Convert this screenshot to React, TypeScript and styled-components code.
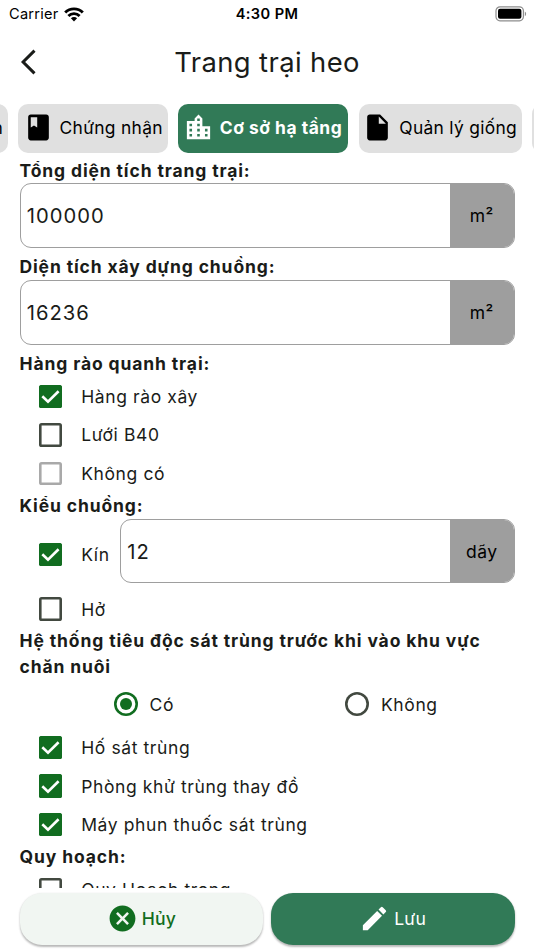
import React from "react";
import styled, { createGlobalStyle, css } from "styled-components";
import { MdBook, MdCancel, MdEdit, MdInsertDriveFile, MdLocationCity } from "react-icons/md";

const GlobalStyle = createGlobalStyle`
  * { box-sizing: border-box; }
  html, body { margin: 0; padding: 0; background: #fff; overflow: hidden; }
  body { font-family: Inter, "Liberation Sans", sans-serif; color: #1a1c19; }
`;

const Screen = styled.div`
  width: 534px;
  height: 950px;
  display: flex;
  flex-direction: column;
  overflow: hidden;
  background: #fff;
`;

const StatusBar = styled.div`
  height: 26px;
  flex: none;
  display: grid;
  grid-template-columns: 1fr auto 1fr;
  align-items: center;
  padding: 1px 7px 0 9px;
  font-size: 14.6px;
  line-height: 26px;
  color: #000;
`;

const Carrier = styled.div`
  display: flex;
  align-items: center;
  gap: 5.5px;
  letter-spacing: 0.22px;
`;

const Clock = styled.div`
  margin-left: -2px;
  font-weight: 600;
  letter-spacing: 0.4px;
`;

const BatterySlot = styled.div`
  display: flex;
  justify-content: flex-end;
`;

const Header = styled.header`
  height: 74px;
  flex: none;
  display: grid;
  grid-template-columns: 60px 1fr 60px;
  align-items: center;
`;

const BackButton = styled.button`
  border: 0;
  background: none;
  padding: 0 0 2px 20px;
  display: flex;
  color: inherit;
`;

const Title = styled.h1`
  margin: 0;
  padding-bottom: 2px;
  text-align: center;
  font-size: 27.4px;
  font-weight: 400;
  line-height: 36px;
  letter-spacing: 0.4px;
  white-space: nowrap;
`;

const Tabs = styled.nav`
  height: 57.5px;
  padding-top: 3.5px;
  flex: none;
  display: flex;
  gap: 10.4px;
  overflow: hidden;
`;

const Tab = styled.button<{ $width: number; $active?: boolean; $shift?: number }>`
  flex: none;
  width: ${(p) => p.$width}px;
  margin-left: ${(p) => p.$shift ?? 0}px;
  height: 49px;
  border: 0;
  border-radius: 10px;
  padding: 0 5px 1px 5px;
  display: flex;
  align-items: center;
  justify-content: flex-end;
  gap: 6px;
  white-space: nowrap;
  font-family: inherit;
  font-size: 17.4px;
  letter-spacing: 0.3px;
  background: #e0e0e0;
  color: #000;
  svg { flex: none; }
  ${(p) =>
    p.$active &&
    css`
      padding-right: 6px;
      background: #317a57;
      color: #fff;
      font-weight: 700;
      letter-spacing: 0.53px;
    `}
`;

const Form = styled.main`
  flex: none;
  height: 730px;
  overflow: hidden;
  padding: 0 19.5px;
`;

const Label = styled.div`
  font-size: 17.5px;
  font-weight: 700;
  line-height: 25.8px;
  letter-spacing: 0.87px;
`;

const Field = styled.div`
  flex: 1;
  height: 64.5px;
  margin-bottom: 6.5px;
  display: flex;
  border: 1.3px solid #9e9e9e;
  border-radius: 11px;
  overflow: hidden;
`;

const Value = styled.div`
  flex: 1;
  padding-left: 6.3px;
  line-height: 64px;
  font-size: 20.2px;
  letter-spacing: 1px;
`;

const Unit = styled.div`
  width: 63.5px;
  background: #9e9e9e;
  color: #000;
  text-align: center;
  font-size: 17.5px;
  line-height: 64px;
  letter-spacing: 0.4px;
`;

const Option = styled.div`
  height: 38.7px;
  padding-left: 19.3px;
  display: flex;
  align-items: center;
`;

const FieldRow = styled.div`
  display: flex;
`;

const FieldOption = styled(Option)`
  width: 100.5px;
  height: 71px;
`;

const OptionText = styled.span`
  margin-left: 19px;
  font-size: 17.5px;
  letter-spacing: 0.6px;
  white-space: nowrap;
`;

const Box = styled.span<{ $state: "on" | "off" | "disabled" }>`
  flex: none;
  width: 23.4px;
  height: 23.4px;
  border-radius: 2.6px;
  display: flex;
  align-items: center;
  justify-content: center;
  box-shadow: inset 0 0 0 2.6px ${(p) => ({ on: "#116d20", off: "#424940", disabled: "#a9a9a9" })[p.$state]};
  background: ${(p) => (p.$state === "on" ? "#116d20" : "transparent")};
  svg { flex: none; }
`;

const RadioRow = styled.div`
  height: 48px;
  display: flex;
  padding-left: 94px;
`;

const RadioOption = styled.div`
  flex: none;
  width: 231.5px;
  display: flex;
  align-items: center;
`;

const Radio = styled.span<{ $on?: boolean }>`
  width: 24px;
  height: 24px;
  border-radius: 50%;
  box-shadow: inset 0 0 0 2.6px ${(p) => (p.$on ? "#116d20" : "#424940")};
  display: flex;
  align-items: center;
  justify-content: center;
  &::after {
    content: "";
    width: 12px;
    height: 12px;
    border-radius: 50%;
    background: ${(p) => (p.$on ? "#116d20" : "transparent")};
  }
`;

const RadioText = styled.span`
  margin-left: 12px;
  font-size: 17.5px;
  letter-spacing: 0.6px;
`;

const Actions = styled.footer`
  flex: none;
  display: flex;
  gap: 7.5px;
  padding: 5.5px 19.5px 0;
`;

const Action = styled.button<{ $primary?: boolean }>`
  flex: 1;
  height: 51.5px;
  border: 0;
  border-radius: 22px;
  display: flex;
  align-items: center;
  justify-content: center;
  gap: 4px;
  font-family: inherit;
  font-size: 17.6px;
  font-weight: ${(p) => (p.$primary ? 400 : 500)};
  letter-spacing: 0.15px;
  color: ${(p) => (p.$primary ? "#fff" : "#116d20")};
  background: ${(p) => (p.$primary ? "#317a57" : "#f1f6f2")};
  box-shadow: 0 1.3px 2px rgba(0, 0, 0, 0.24), 0 1px 3px rgba(0, 0, 0, 0.08);
`;

const WifiIcon = () => (
  <svg width="20" height="15" viewBox="0 0 20 15" fill="none" stroke="#000" strokeWidth="2.9">
    <path d="M1.2 5.5a12.4 12.4 0 0 1 17.6 0" />
    <path d="M4.4 9a7.9 7.9 0 0 1 11.2 0" />
    <path d="M10 14.4 6.9 11.3a4.4 4.4 0 0 1 6.2 0z" fill="#000" stroke="none" />
  </svg>
);

const BatteryIcon = () => (
  <svg width="32" height="16" viewBox="0 0 32 16">
    <rect x="1" y="0.8" width="27.4" height="14" rx="4" fill="none" stroke="#8d8d8d" strokeWidth="1.2" />
    <rect x="3" y="2.8" width="23.4" height="10" rx="2" fill="#000" />
    <path d="M29.8 5.6v4.6c1.8-.8 1.8-3.8 0-4.6z" fill="#8d8d8d" />
  </svg>
);

const BackIcon = () => (
  <svg width="18" height="26" viewBox="0 0 18 26" fill="none" stroke="#1a1c19" strokeWidth="3">
    <path d="M14.5 1.6 3.1 13 14.5 24.4" />
  </svg>
);

const CheckIcon = () => (
  <svg width="19" height="15" viewBox="0 0 19 15" fill="none" stroke="#fff" strokeWidth="2.6">
    <path d="M1.3 7.2 7 12.6 17.6 2.2" />
  </svg>
);

type CheckState = "on" | "off" | "disabled";

const Checkbox = ({ state }: { state: CheckState }) => (
  <Box $state={state}>{state === "on" && <CheckIcon />}</Box>
);

const CheckOption = ({ state, text }: { state: CheckState; text: string }) => (
  <Option>
    <Checkbox state={state} />
    <OptionText>{text}</OptionText>
  </Option>
);

const UnitField = ({ value, unit }: { value: string; unit: string }) => (
  <Field>
    <Value>{value}</Value>
    <Unit>{unit}</Unit>
  </Field>
);

export default function App() {
  return (
    <>
      <GlobalStyle />
      <Screen>
        <StatusBar>
          <Carrier>
            Carrier
            <WifiIcon />
          </Carrier>
          <Clock>4:30 PM</Clock>
          <BatterySlot>
            <BatteryIcon />
          </BatterySlot>
        </StatusBar>
        <Header>
          <BackButton aria-label="Quay lại">
            <BackIcon />
          </BackButton>
          <Title>Trang trại heo</Title>
        </Header>
        <Tabs>
          <Tab $width={148} $shift={-140}>Thông tin</Tab>
          <Tab $width={149.4}>
            <MdBook size={31} />
            Chứng nhận
          </Tab>
          <Tab $width={170} $active>
            <MdLocationCity size={31} />
            Cơ sở hạ tầng
          </Tab>
          <Tab $width={163.4}>
            <MdInsertDriveFile size={31} />
            Quản lý giống
          </Tab>
          <Tab $width={150} />
        </Tabs>
        <Form>
          <Label>Tổng diện tích trang trại:</Label>
          <UnitField value="100000" unit="m²" />
          <Label>Diện tích xây dựng chuồng:</Label>
          <UnitField value="16236" unit="m²" />
          <Label>Hàng rào quanh trại:</Label>
          <CheckOption state="on" text="Hàng rào xây" />
          <CheckOption state="off" text="Lưới B40" />
          <CheckOption state="disabled" text="Không có" />
          <Label>Kiểu chuồng:</Label>
          <FieldRow>
            <FieldOption>
              <Checkbox state="on" />
              <OptionText>Kín</OptionText>
            </FieldOption>
            <UnitField value="12" unit="dãy" />
          </FieldRow>
          <CheckOption state="off" text="Hở" />
          <Label>Hệ thống tiêu độc sát trùng trước khi vào khu vực chăn nuôi</Label>
          <RadioRow>
            <RadioOption>
              <Radio $on />
              <RadioText>Có</RadioText>
            </RadioOption>
            <RadioOption>
              <Radio />
              <RadioText>Không</RadioText>
            </RadioOption>
          </RadioRow>
          <CheckOption state="on" text="Hố sát trùng" />
          <CheckOption state="on" text="Phòng khử trùng thay đồ" />
          <CheckOption state="on" text="Máy phun thuốc sát trùng" />
          <Label>Quy hoạch:</Label>
          <CheckOption state="off" text="Quy Hoạch trong" />
        </Form>
        <Actions>
          <Action>
            <MdCancel size={31} />
            Hủy
          </Action>
          <Action $primary>
            <MdEdit size={31} />
            Lưu
          </Action>
        </Actions>
      </Screen>
    </>
  );
}
